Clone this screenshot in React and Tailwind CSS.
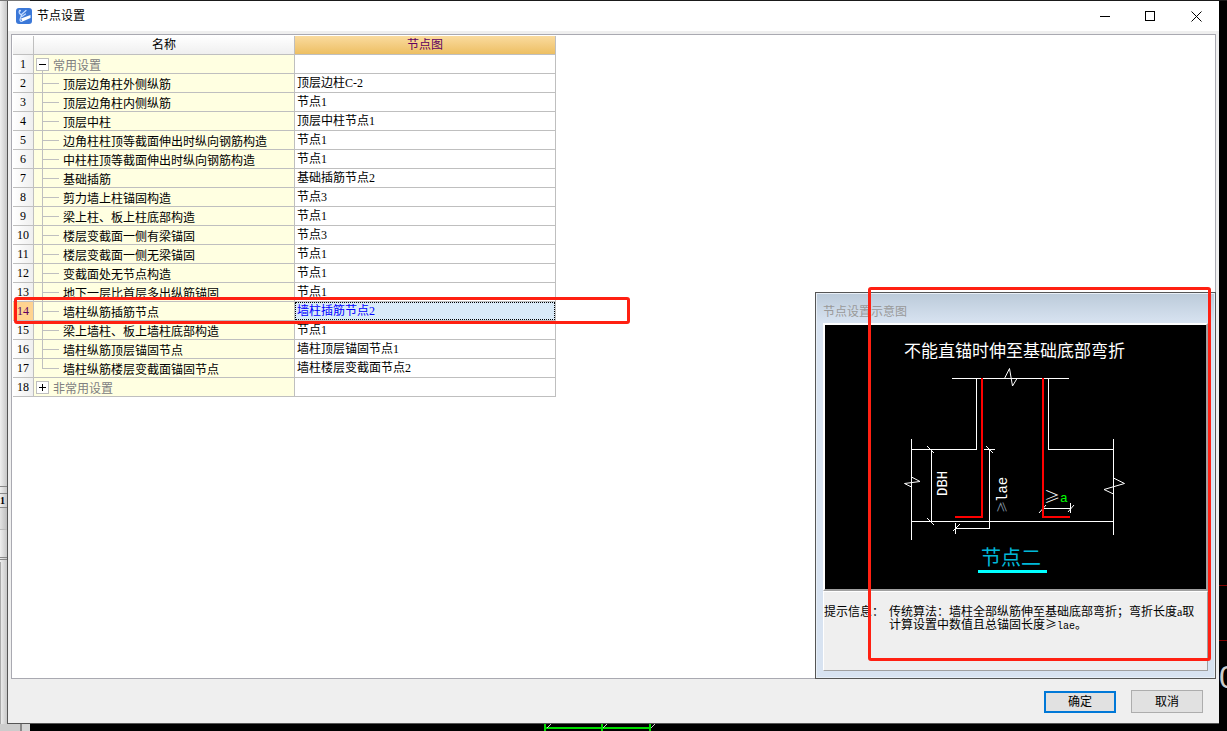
import { useState } from "react";

const GENERAL_ROWS = [
  { name: "顶层边角柱外侧纵筋", node: "顶层边柱C-2" },
  { name: "顶层边角柱内侧纵筋", node: "节点1" },
  { name: "顶层中柱", node: "顶层中柱节点1" },
  { name: "边角柱柱顶等截面伸出时纵向钢筋构造", node: "节点1" },
  { name: "中柱柱顶等截面伸出时纵向钢筋构造", node: "节点1" },
  { name: "基础插筋", node: "基础插筋节点2" },
  { name: "剪力墙上柱锚固构造", node: "节点3" },
  { name: "梁上柱、板上柱底部构造", node: "节点1" },
  { name: "楼层变截面一侧有梁锚固", node: "节点3" },
  { name: "楼层变截面一侧无梁锚固", node: "节点1" },
  { name: "变截面处无节点构造", node: "节点1" },
  { name: "地下一层比首层多出纵筋锚固", node: "节点1" },
  { name: "墙柱纵筋插筋节点", node: "墙柱插筋节点2" },
  { name: "梁上墙柱、板上墙柱底部构造", node: "节点1" },
  { name: "墙柱纵筋顶层锚固节点", node: "墙柱顶层锚固节点1" },
  { name: "墙柱纵筋楼层变截面锚固节点", node: "墙柱楼层变截面节点2" },
];

function AppIcon() {
  return (
    <svg className="size-4" viewBox="0 0 16 16" fill="none">
      <rect width="16" height="16" rx="3" fill="#3b78d8" />
      <path d="M3.500 2.500c-1 2 0 3.500 2 4.500L4 11.500c0 1.500 1 2 2 2M5.500 6.500L10 2.500M6 8.500L9.500 6" stroke="#c4dcff" strokeWidth="1.200" strokeLinecap="round" />
      <circle cx="4" cy="2.800" r="1" fill="#d6e6ff" />
      <path d="M5 10.500L14.500 7v3L6.500 13.500z" fill="#fff" />
    </svg>
  );
}

function TitleBar() {
  return (
    <header className="flex h-[30px] shrink-0 items-center bg-white pl-2">
      <AppIcon />
      <h1 className="flex-1 pl-[5px] text-xs">节点设置</h1>
      <button type="button" aria-label="最小化" className="flex h-full w-[45px] items-center justify-center">
        <svg className="size-[11px]" viewBox="0 0 11 11" stroke="#000" shapeRendering="crispEdges">
          <path d="M0 5.500h10" />
        </svg>
      </button>
      <button type="button" aria-label="最大化" className="flex h-full w-[45px] items-center justify-center">
        <svg className="size-[11px]" viewBox="0 0 11 11" stroke="#000" fill="none" shapeRendering="crispEdges">
          <path d="M.5 .5h9v9h-9z" />
        </svg>
      </button>
      <button type="button" aria-label="关闭" className="flex h-full w-[46px] items-center justify-center">
        <svg className="size-[11px]" viewBox="0 0 11 11" stroke="#000">
          <path d="M.5 .5l10 10M10.500 .5l-10 10" />
        </svg>
      </button>
    </header>
  );
}

function RowNumber({ value, active }) {
  return (
    <th
      scope="row"
      className={
        active
          ? "h-[19px] border-r border-b border-[#bfbfbf] bg-[#ffd390] p-0 text-center font-normal text-[#600060]"
          : "h-[19px] border-r border-b border-[#bfbfbf] bg-linear-to-r from-white to-[#efefef] p-0 text-center font-normal"
      }
    >
      {value}
    </th>
  );
}

function GroupRow({ number, label, open, onToggle }) {
  return (
    <tr>
      <RowNumber value={number} />
      <td className="border-r border-b border-[#bfbfbf] bg-[#ffffe1] p-0">
        <button type="button" aria-expanded={open} onClick={onToggle} className="flex h-[18px] items-center gap-1 pl-[2px] text-[#808080]">
          <svg className="h-[18px] w-[13px]" viewBox="0 0 13 18" fill="none" shapeRendering="crispEdges">
            <path d="M.5 3.500h12v12H.5z" fill="#fff" stroke="#bfbfbf" />
            <path d="M3 9.500h7" stroke="#000" />
            {open ? <path d="M6.500 16v2" stroke="#bfbfbf" /> : <path d="M6.500 6v7" stroke="#000" />}
          </svg>
          <span className="pt-[3px]">{label}</span>
        </button>
      </td>
      <td className="border-r border-b border-[#bfbfbf] bg-white p-0"></td>
    </tr>
  );
}

function SettingRow({ number, row, last, active, onSelect }) {
  return (
    <tr onClick={onSelect}>
      <RowNumber value={number} active={active} />
      <td className="border-r border-b border-[#bfbfbf] bg-[#ffffe1] p-0">
        <div className="flex h-[18px] items-center gap-1 pl-[2px]">
          <svg className="h-[18px] w-[23px]" viewBox="0 0 23 18" stroke="#bfbfbf" shapeRendering="crispEdges">
            <path d={last ? "M6.500 0v10" : "M6.500 0v18"} />
            <path d="M6 9.500h17" />
          </svg>
          <span className="pt-[3px]">{row.name}</span>
        </div>
      </td>
      <td
        className={
          active
            ? "border-r border-b border-[#bfbfbf] bg-[#d9eaf8] p-0 text-[#0000ff]"
            : "border-r border-b border-[#bfbfbf] bg-white p-0"
        }
      >
        <div className={active ? "h-[18px] pl-[2px] outline-1 -outline-offset-1 outline-dotted outline-black" : "h-[18px] pl-[2px]"}>
          {row.node}
        </div>
      </td>
    </tr>
  );
}

function SettingsTable() {
  const [open, setOpen] = useState(true);
  const [extraOpen, setExtraOpen] = useState(false);
  const [selected, setSelected] = useState(12);

  return (
    <div className="relative w-[543px]">
      <table className="w-full table-fixed border-separate border-spacing-0 text-xs leading-[18px] whitespace-nowrap">
        <colgroup>
          <col className="w-[21px]" />
          <col className="w-[261px]" />
          <col className="w-[261px]" />
        </colgroup>
        <thead>
          <tr>
            <td className="h-[19px] border-r border-b border-[#bfbfbf] bg-linear-to-b from-white to-[#efefef] p-0"></td>
            <th scope="col" className="border-r border-b border-[#bfbfbf] bg-linear-to-b from-white to-[#efefef] p-0 font-normal">名称</th>
            <th scope="col" className="border-r border-b border-[#bfbfbf] bg-linear-to-b from-[#fadb9e] to-[#edbf62] p-0 font-normal text-[#600060]">节点图</th>
          </tr>
        </thead>
        <tbody>
          <GroupRow number={1} label="常用设置" open={open} onToggle={() => setOpen(!open)} />
          {open &&
            GENERAL_ROWS.map((row, i) => (
              <SettingRow
                key={row.name}
                number={i + 2}
                row={row}
                last={i === GENERAL_ROWS.length - 1}
                active={i === selected}
                onSelect={() => setSelected(i)}
              />
            ))}
          <GroupRow number={18} label="非常用设置" open={extraOpen} onToggle={() => setExtraOpen(!extraOpen)} />
        </tbody>
      </table>
      <div className="pointer-events-none absolute top-[261px] left-px h-[27px] w-[616px] rounded-[3px] border-3 border-[#ff2012]"></div>
    </div>
  );
}

function NodeDiagram() {
  return (
    <svg className="block h-[264px] w-full bg-black" viewBox="0 0 381 264" fill="none">
      <g stroke="#fff" shapeRendering="crispEdges">
        {/* column and footing outline */}
        <path d="M127 53.500H244M151.500 53v71.500H86M223.500 53v71.500H289" />
        <path d="M86.500 114V215M288.500 114V210M86 196.500H289" />
        {/* dimension lines */}
        <path d="M106.500 124V197M164.500 124V203.500H130M159 124.500H170M130.500 198V209M217 183.500H246M245.500 178V188" />
      </g>
      <g stroke="#fff">
        <path d="M179.500 53.500l5-10 3 17.500 4.500-7.500" />
        <path d="M86.500 152l8.500 4.500-15.500 2 7 3.500" />
        <path d="M288.500 153l11 5.500-20.500 6 9.500 4.500" />
        <path d="M102 121l7 7M102 193l7 7M161 121l7 7M128 206l7-7M214 188l7-8M243 187l6-7" />
      </g>
      {/* rebar */}
      <path d="M157 53V192H130M218 53V192H245" stroke="#f00" strokeWidth="2" shapeRendering="crispEdges" />
      <path d="M153 246.500H222" stroke="#0ff" strokeWidth="3" shapeRendering="crispEdges" />
      <g fill="#fff" className="font-['Liberation_Mono','Noto_Sans_CJK_SC',monospace]">
        <text x="79" y="32" className="text-[17px]">不能直锚时伸至基础底部弯折</text>
        <text transform="translate(122 171) rotate(-90)" className="text-[14px]">DBH</text>
        <text transform="translate(182 177) rotate(-90)" className="text-[14px]">lae</text>
        <text transform="translate(182 188) rotate(-90)" fill="#8496a8" className="font-['Noto_Sans_CJK_SC',sans-serif] text-[12px]">≥</text>
        <text x="219" y="178" className="font-['Noto_Sans_CJK_SC',sans-serif] text-[16px] font-light">≥</text>
        <text x="235" y="177" fill="#0f0" className="text-[13px]">a</text>
        <text x="156" y="240" fill="#00b8d8" className="text-[20px]">节点二</text>
      </g>
    </svg>
  );
}

function PreviewPanel() {
  return (
    <section className="absolute -right-px -bottom-px w-[401px] border border-[#555] bg-[#d8e3f1] text-xs">
      <div className="border border-[#e8eff7] px-[6px] pb-[6px]">
        <h2 className="-mx-[6px] h-[29px] bg-linear-to-b from-[#bccbda] to-[#d8e3f1] pt-[9px] pl-[6px] leading-[18px] text-[#999]">节点设置示意图</h2>
        <div className="border-2 border-white border-r-[#a0a0a0] border-b-[#a0a0a0]">
          <NodeDiagram />
        </div>
        <div className="flex h-[80px] border border-white border-r-[#a0a0a0] border-b-[#a0a0a0] bg-[#efefef] pt-[14px] leading-3">
          <span className="w-[65px] shrink-0">提示信息：</span>
          <p className="whitespace-nowrap">
            传统算法：墙柱全部纵筋伸至基础底部弯折；弯折长度a取
            <br />
            计算设置中数值且总锚固长度
            <span className="font-['Noto_Sans_CJK_SC',sans-serif]">≥</span>
            <span className="font-['Liberation_Mono',monospace] text-[10px]">lae</span>。
          </p>
        </div>
      </div>
      <div className="pointer-events-none absolute -top-[6px] right-[4px] h-[374px] w-[343px] rounded-[3px] border-3 border-[#ff2012]"></div>
    </section>
  );
}

function Dialog() {
  return (
    <div className="flex min-w-0 flex-1 flex-col border-b border-l border-[#555] bg-[#efefef]">
      <TitleBar />
      <main className="relative mx-[3px] mt-[3px] flex-1 border border-[#a9a9b1] bg-white pt-px pl-px">
        <SettingsTable />
        <PreviewPanel />
      </main>
      <footer className="flex h-11 shrink-0 items-start justify-end gap-[15px] pt-[11px] pr-4 text-xs">
        <button type="button" className="mt-px h-[22px] w-[72px] border-2 border-[#0078d7] bg-[#e1e1e1]">确定</button>
        <button type="button" className="h-[23px] w-[72px] border border-[#adadad] bg-[#e1e1e1]">取消</button>
      </footer>
    </div>
  );
}

// Slice of the main window that shows left of the dialog
function LeftEdge() {
  return (
    <div className="flex w-[7px] shrink-0 flex-col overflow-hidden bg-linear-to-r from-[#f0f0f0] to-[#c8c8c8] text-[10px]">
      <div className="h-[486px] border-b border-[#888]"></div>
      <div className="h-[7px] border-b border-[#888]"></div>
      <div className="h-[14px] border-b border-[#888] leading-[14px] font-bold">1</div>
      <div className="h-[22px] border-b border-[#bbb] bg-black/5"></div>
      <div className="h-[28px] border-b border-[#888]"></div>
      <div className="h-[2px] border-b border-[#888]"></div>
      <div className="mt-[2px] flex-1 border-l border-[#aaa]"></div>
    </div>
  );
}

function RightEdge() {
  return (
    <div className="flex w-2 shrink-0 flex-col overflow-hidden bg-black">
      <div className="h-[585px] border-b border-[#800000]"></div>
      <div className="h-[55px] border-b border-[#800000]"></div>
      <span className="pt-[18px] font-['Liberation_Sans',sans-serif] text-[32px] leading-9 text-[#ccc]">0</span>
    </div>
  );
}

export default function App() {
  return (
    <div className="flex h-screen flex-col overflow-hidden bg-black font-['Liberation_Serif','Noto_Sans_CJK_SC',sans-serif] text-black">
      <div className="h-px shrink-0 bg-[#1a1a1a]"><div className="h-px w-[30px] bg-[#777]"></div></div>
      <div className="flex min-h-0 flex-1">
        <LeftEdge />
        <Dialog />
        <RightEdge />
      </div>
      <div className="flex h-[7px] shrink-0">
        <div className="w-[22px] border-r-2 border-[#888] bg-[#ccc]"></div>
        <div className="w-2 bg-[#d4d4d4]"></div>
        <svg className="ml-[514px] h-[7px] w-28" viewBox="0 0 112 7" fill="none">
          <path d="M1 0v7M57.500 0v7M106 0v7M0 4h107" stroke="#00dc00" strokeWidth="2" shapeRendering="crispEdges" />
          <path d="M3 4l4-4M59 4l4-4M107 4l4-4" stroke="#ccc" />
        </svg>
      </div>
    </div>
  );
}
